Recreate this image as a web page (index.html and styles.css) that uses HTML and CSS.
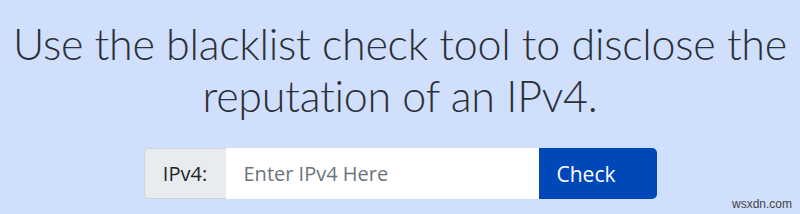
FILE: index.html
```html
<!doctype html>
<html lang="en">
  <head>
    <meta charset="utf-8">
    <title>Blacklist Check</title>
    <link rel="stylesheet" href="styles.css">
  </head>
  <body>
    <div class="page">
      <h1 class="lead">Use the blacklist check tool to disclose the reputation of an IPv4.</h1>
      <form class="check-form" onsubmit="return false">
        <span class="addon">IPv4:</span>
        <input class="ip-input" type="text" placeholder="Enter IPv4 Here">
        <button class="btn-check" type="submit">Check</button>
      </form>
    </div>
    <div class="mark">wsxdn.com</div>
  </body>
</html>
```
FILE: styles.css
```css
html, body {
  height: 100%;
}

body {
  margin: 0;
  background-color: #cfdffc;
  font-family: "Open Sans", "Noto Sans", sans-serif;
  color: #212529;
  position: relative;
  overflow: hidden;
}

.page {
  padding-top: 18px;
  text-align: center;
}

.lead {
  margin: 0 auto;
  width: 784px;
  font-family: Lato, "Open Sans", sans-serif;
  font-size: 43px;
  font-weight: 300;
  line-height: 52px;
  letter-spacing: -0.25px;
  color: #2b3038;
}

.check-form {
  display: flex;
  width: 513px;
  height: 51px;
  margin: 26px auto 0;
}

.addon {
  display: flex;
  align-items: center;
  justify-content: center;
  width: 82px;
  background: #e9ecef;
  border: 1px solid #ced4da;
  border-right: 0;
  border-radius: 5px 0 0 5px;
  font-size: 20px;
  color: #212529;
  box-sizing: border-box;
}

.ip-input {
  width: 313px;
  border: 1px solid #ffffff;
  background: #ffffff;
  padding: 0 17px;
  font-family: inherit;
  font-size: 20px;
  color: #212529;
  box-sizing: border-box;
  outline: none;
}

.ip-input::placeholder {
  color: #6c757d;
}

.btn-check {
  width: 118px;
  border: 0;
  padding: 0 0 0 18px;
  text-align: left;
  background: #0047b9;
  color: #ffffff;
  font-family: inherit;
  font-size: 21px;
  border-radius: 0 5px 5px 0;
  cursor: pointer;
}

.mark {
  position: absolute;
  right: 8px;
  bottom: 3px;
  font-family: "Liberation Sans", Arial, sans-serif;
  font-size: 12px;
  color: #444;
}
```
